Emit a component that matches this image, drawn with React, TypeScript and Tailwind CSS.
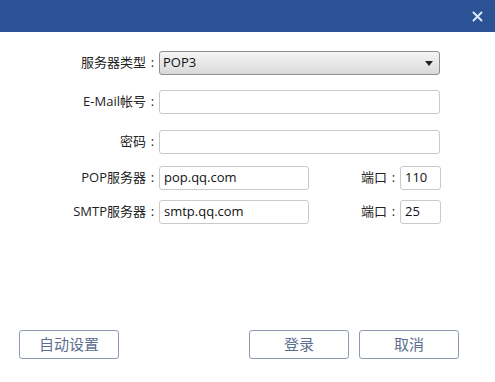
import React from 'react';

const font = { fontFamily: '"Open Sans", "Noto Sans CJK SC", sans-serif' };

const Label: React.FC<{ children: React.ReactNode }> = ({ children }) => (
  <div className="w-[159px] shrink-0 flex justify-end items-center text-[13px] text-[#222]">
    <span>{children}</span>
    <span className="w-[13px] text-center">:</span>
  </div>
);

const Field: React.FC<{ value?: string; className?: string }> = ({ value, className }) => (
  <div
    className={`h-[24px] border border-[#c9c9c9] rounded-[3px] bg-white flex items-center px-[4px] text-[13px] text-[#111] ${className || ''}`}
  >
    {value}
  </div>
);

export default function App() {
  return (
    <div className="w-[495px] h-[382px] bg-white flex flex-col overflow-hidden" style={font}>
      {/* Title bar */}
      <div className="h-[32px] bg-[#2c5296] flex items-center justify-end pr-[12px] shrink-0">
        <svg width="11" height="11" viewBox="0 0 11 11">
          <path d="M1.5 1.5 L9.5 9.5 M9.5 1.5 L1.5 9.5" stroke="#dbe6f7" strokeWidth="2" strokeLinecap="round" />
        </svg>
      </div>

      {/* Form */}
      <div className="flex flex-col pt-[19px]">
        <div className="flex items-center h-[24px]">
          <Label>服务器类型</Label>
          <div className="w-[281px] h-[24px] border border-[#8f8f8f] rounded-[3px] bg-gradient-to-b from-[#f4f4f4] via-[#e8e8e8] to-[#d9d9d9] flex items-center justify-between pl-[3px] pr-[6px] text-[13px] text-[#111]">
            <span>POP3</span>
            <svg width="8" height="5" viewBox="0 0 8 5">
              <path d="M0 0 L8 0 L4 5 Z" fill="#222" />
            </svg>
          </div>
        </div>

        <div className="flex items-center mt-[15px]">
          <Label>E-Mail帐号</Label>
          <Field className="w-[281px]" />
        </div>

        <div className="flex items-center mt-[16px]">
          <Label>密码</Label>
          <Field className="w-[281px]" />
        </div>

        <div className="flex items-center mt-[12px]">
          <Label>POP服务器</Label>
          <Field value="pop.qq.com" className="w-[150px]" />
          <div className="ml-[52px] w-[39px] flex items-center text-[13px] text-[#222]">
            <span>端口</span>
            <span className="w-[13px] text-center">:</span>
          </div>
          <Field value="110" className="w-[41px]" />
        </div>

        <div className="flex items-center mt-[10px]">
          <Label>SMTP服务器</Label>
          <Field value="smtp.qq.com" className="w-[150px]" />
          <div className="ml-[52px] w-[39px] flex items-center text-[13px] text-[#222]">
            <span>端口</span>
            <span className="w-[13px] text-center">:</span>
          </div>
          <Field value="25" className="w-[41px]" />
        </div>
      </div>

      {/* Buttons */}
      <div className="mt-auto mb-[23px] flex items-center px-[19px]">
        <button className="w-[100px] h-[29px] border border-[#8d9ab0] rounded-[3px] bg-white text-[15px] text-[#5d6f90]">
          自动设置
        </button>
        <div className="flex-1" />
        <button className="w-[100px] h-[29px] border border-[#8d9ab0] rounded-[3px] bg-white text-[15px] text-[#5d6f90]">
          登录
        </button>
        <button className="ml-[10px] mr-[17px] w-[100px] h-[29px] border border-[#8d9ab0] rounded-[3px] bg-white text-[15px] text-[#5d6f90]">
          取消
        </button>
      </div>
    </div>
  );
}
